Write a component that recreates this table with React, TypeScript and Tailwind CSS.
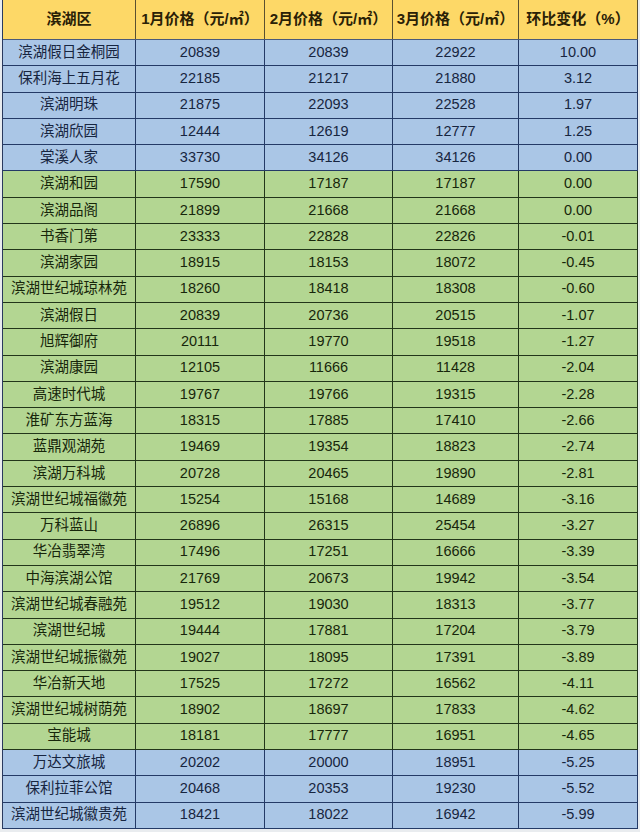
const rows: [string, string, string, string, string][] = [
  ['滨湖假日金桐园', '20839', '20839', '22922', '10.00'],
  ['保利海上五月花', '22185', '21217', '21880', '3.12'],
  ['滨湖明珠', '21875', '22093', '22528', '1.97'],
  ['滨湖欣园', '12444', '12619', '12777', '1.25'],
  ['棠溪人家', '33730', '34126', '34126', '0.00'],
  ['滨湖和园', '17590', '17187', '17187', '0.00'],
  ['滨湖品阁', '21899', '21668', '21668', '0.00'],
  ['书香门第', '23333', '22828', '22826', '-0.01'],
  ['滨湖家园', '18915', '18153', '18072', '-0.45'],
  ['滨湖世纪城琼林苑', '18260', '18418', '18308', '-0.60'],
  ['滨湖假日', '20839', '20736', '20515', '-1.07'],
  ['旭辉御府', '20111', '19770', '19518', '-1.27'],
  ['滨湖康园', '12105', '11666', '11428', '-2.04'],
  ['高速时代城', '19767', '19766', '19315', '-2.28'],
  ['淮矿东方蓝海', '18315', '17885', '17410', '-2.66'],
  ['蓝鼎观湖苑', '19469', '19354', '18823', '-2.74'],
  ['滨湖万科城', '20728', '20465', '19890', '-2.81'],
  ['滨湖世纪城福徽苑', '15254', '15168', '14689', '-3.16'],
  ['万科蓝山', '26896', '26315', '25454', '-3.27'],
  ['华冶翡翠湾', '17496', '17251', '16666', '-3.39'],
  ['中海滨湖公馆', '21769', '20673', '19942', '-3.54'],
  ['滨湖世纪城春融苑', '19512', '19030', '18313', '-3.77'],
  ['滨湖世纪城', '19444', '17881', '17204', '-3.79'],
  ['滨湖世纪城振徽苑', '19027', '18095', '17391', '-3.89'],
  ['华冶新天地', '17525', '17272', '16562', '-4.11'],
  ['滨湖世纪城树荫苑', '18902', '18697', '17833', '-4.62'],
  ['宝能城', '18181', '17777', '16951', '-4.65'],
  ['万达文旅城', '20202', '20000', '18951', '-5.25'],
  ['保利拉菲公馆', '20468', '20353', '19230', '-5.52'],
  ['滨湖世纪城徽贵苑', '18421', '18022', '16942', '-5.99'],
];

const headers = ['滨湖区', '1月价格（元/㎡）', '2月价格（元/㎡）', '3月价格（元/㎡）', '环比变化（%）'];
const cols = 'grid grid-cols-[133px_129px_128px_126px_119px]';

export default function App() {
  return (
    <div className="w-[640px] h-[832px] bg-[#e9ecef] overflow-hidden" style={{ fontFamily: '"Liberation Sans", "Noto Sans CJK SC", sans-serif' }}>
      <div className="ml-[2px] w-[636px] border-l border-[#2a3a5e]">
        <div className={`${cols} h-[40px] bg-[#fdd867] border-b border-[#4a5a7a] text-[15px] font-bold text-[#2a2106]`}>
          {headers.map((h) => (
            <div key={h} className="flex items-center justify-center border-r border-[#5a5030]">{h}</div>
          ))}
        </div>
        {rows.map((r, i) => {
          const green = i >= 5 && i <= 26;
          return (
            <div
              key={r[0]}
              className={`${cols} h-[26.3px] border-b text-[14.5px] ${green ? 'bg-[#b3d692] border-[#22361a] text-[#17260b]' : 'bg-[#aac6e6] border-[#243a66] text-[#172540]'}`}
            >
              {r.map((c, j) => (
                <div key={j} className={`flex items-center justify-center border-r ${green ? 'border-[#22361a]' : 'border-[#243a66]'}`}>{c}</div>
              ))}
            </div>
          );
        })}
      </div>
    </div>
  );
}
